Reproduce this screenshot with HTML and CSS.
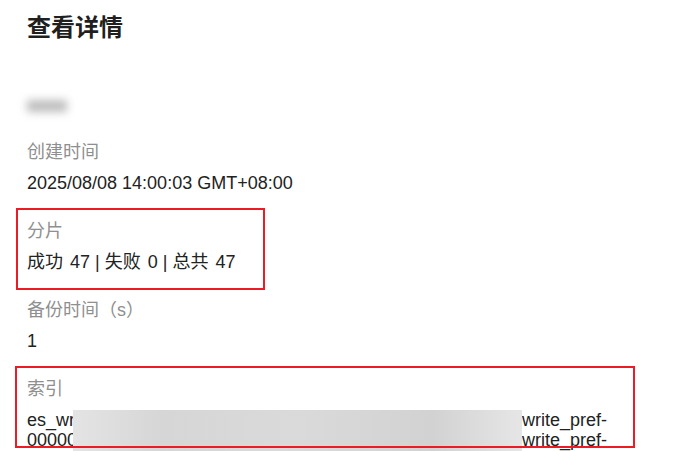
FILE: index.html
```html
<!DOCTYPE html>
<html lang="zh-CN">

<head>
    <meta charset="UTF-8" />
    <meta name="viewport" content="width=device-width, initial-scale=1.0" />
    <title>查看详情</title>
    <link rel="stylesheet" href="styles.css">
</head>

<body>
    <div class="panel">
        <h1 class="title">查看详情</h1>
        <div class="item item-name">
            <div class="value"><span class="blurred"></span></div>
        </div>
        <div class="item">
            <div class="label">创建时间</div>
            <div class="value">2025/08/08 14:00:03 GMT+08:00</div>
        </div>
        <div class="item">
            <div class="label">分片</div>
            <div class="value">成功 <span class="num">47</span> | 失败 <span class="num">0</span> | 总共 <span class="num">47</span></div>
        </div>
        <div class="item">
            <div class="label">备份时间（s）</div>
            <div class="value">1</div>
        </div>
        <div class="item">
            <div class="label">索引</div>
            <div class="value index-list">
                <div>es_wr<span class="gap gap-1"></span>write_pref-</div>
                <div>00000<span class="gap gap-2"></span>write_pref-</div>
                <div class="mask"></div>
            </div>
        </div>

        <div class="mark mark-shards"></div>
        <div class="mark mark-index"></div>
    </div>
</body>

</html>
```

FILE: styles.css
```css
* {
    margin: 0;
    padding: 0;
    box-sizing: border-box;
}

body {
    background: #fff;
    color: #222;
    font-family: 'Liberation Sans', 'Noto Sans CJK SC', sans-serif;
    overflow: hidden;
}

.panel {
    position: relative;
    padding: 14px 27px;
    width: 683px;
}

.title {
    font-size: 24px;
    line-height: 28px;
    font-weight: 700;
    color: #1f1f1f;
}

.item {
    margin-bottom: 24px;
}

.item-name {
    margin-top: 52px;
    margin-bottom: 22px;
}

.label {
    font-size: 18px;
    line-height: 24px;
    color: #8f8f8f;
    margin-bottom: 7px;
}

.value {
    font-size: 18px;
    line-height: 24px;
    color: #222;
}

.num {
    margin-left: 2px;
}

.blurred {
    display: inline-block;
    width: 40px;
    height: 12px;
    margin-top: 6px;
    background: #bdbdbd;
    filter: blur(4px);
    vertical-align: top;
}

.index-list {
    position: relative;
    margin-top: 9px;
    line-height: 20px;
}

.gap {
    display: inline-block;
    height: 1px;
}

.gap-1 {
    width: 447px;
}

.gap-2 {
    width: 445px;
}

.mask {
    position: absolute;
    left: 46px;
    top: 0;
    width: 449px;
    height: 60px;
    background: linear-gradient(90deg, #e4e4e4, #d6d6d6 20%, #dadada 50%, #d2d2d2 80%, #e6e6e6);
}

.mark {
    position: absolute;
    border: 2px solid #ec1c24;
}

.mark-shards {
    left: 16px;
    top: 208px;
    width: 249px;
    height: 82px;
}

.mark-index {
    left: 15px;
    top: 366px;
    width: 620px;
    height: 82px;
}
```
